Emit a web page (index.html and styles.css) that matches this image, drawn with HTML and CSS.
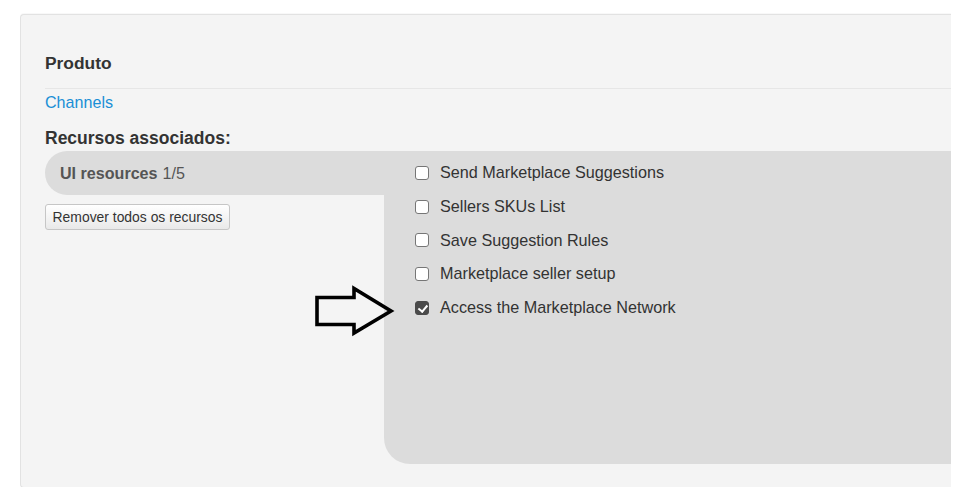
FILE: index.html
```html
<!DOCTYPE html>
<html lang="pt">
<head>
<meta charset="utf-8">
<title>Produto</title>
<link rel="stylesheet" href="styles.css">
</head>
<body>
<div class="panel">
  <h2 class="title">Produto</h2>
  <a class="link" href="#">Channels</a>
  <h3 class="subtitle">Recursos associados:</h3>
  <div class="resources">
    <div class="side">
      <div class="tab"><b>UI resources</b> 1/5</div>
      <button class="btn" type="button">Remover todos os recursos</button>
    </div>
    <div class="content">
      <label class="opt"><input type="checkbox">Send Marketplace Suggestions</label>
      <label class="opt"><input type="checkbox">Sellers SKUs List</label>
      <label class="opt"><input type="checkbox">Save Suggestion Rules</label>
      <label class="opt"><input type="checkbox">Marketplace seller setup</label>
      <label class="opt"><input type="checkbox" checked>Access the Marketplace Network</label>
    </div>
  </div>
</div>
<svg class="arrow" width="84" height="54" viewBox="0 0 84 54" aria-hidden="true">
  <polygon points="5,13.5 42,13.5 42,4.5 79,27 42,49 42,40.5 5,40.5" fill="none" stroke="#000" stroke-width="3.6" stroke-linejoin="miter"/>
</svg>
</body>
</html>
```

FILE: styles.css
```css
html, body {
  margin: 0;
  padding: 0;
  background: #fff;
  overflow: hidden;
}
body {
  font-family: "Liberation Sans", Arial, sans-serif;
  color: #333;
  width: 953px;
  height: 487px;
  position: relative;
}
.panel {
  margin: 14px 0 0 20px;
  width: 931px;
  height: 474px;
  box-sizing: border-box;
  background: #f4f4f4;
  border: 1px solid #e2e2e2;
  border-right: none;
  border-radius: 4px 0 0 4px;
  box-shadow: 0 -1px 1px rgba(0,0,0,0.03);
  padding: 38px 0 0 24px;
  overflow: hidden;
}
.title {
  margin: 0;
  font-size: 17.4px;
  line-height: 20px;
  font-weight: bold;
  padding-bottom: 15px;
  border-bottom: 1px solid #e6e6e6;
}
.link {
  display: block;
  margin-top: 3px;
  font-size: 16.1px;
  line-height: 20px;
  color: #1a8fd6;
  text-decoration: none;
}
.subtitle {
  margin: 16px 0 0 0;
  font-size: 17.5px;
  line-height: 20px;
  font-weight: bold;
}
.resources {
  margin-top: 3px;
  display: flex;
}
.side {
  width: 339px;
  flex: none;
}
.tab {
  height: 44px;
  box-sizing: border-box;
  padding: 1px 0 0 15px;
  display: flex;
  align-items: center;
  background: #dcdcdc;
  border-radius: 22px 0 0 22px;
  font-size: 16.1px;
  color: #555;
}
.tab b {
  margin-right: 5px;
}
.btn {
  margin-top: 9px;
  height: 26px;
  width: 185px;
  padding: 0;
  font-family: "Liberation Sans", Arial, sans-serif;
  font-size: 13.9px;
  color: #333;
  background: linear-gradient(#ffffff, #e9e9e9);
  border: 1px solid #c6c6c6;
  border-radius: 3px;
}
.content {
  flex: 1;
  height: 313px;
  background: #dcdcdc;
  border-radius: 0 0 0 26px;
  padding: 5px 0 0 31px;
  box-sizing: border-box;
}
.opt {
  display: flex;
  align-items: center;
  height: 33.7px;
  font-size: 16.2px;
  color: #333;
}
.opt input {
  appearance: none;
  -webkit-appearance: none;
  margin: 0 11px 0 0;
  width: 14px;
  height: 14px;
  box-sizing: border-box;
  border: 1px solid #767676;
  border-radius: 3px;
  background: #fff;
  position: relative;
  flex: none;
}
.opt input:checked {
  background: #4b4b4b;
  border-color: #4b4b4b;
}
.opt input:checked::after {
  content: "";
  position: absolute;
  left: 3.5px;
  top: 1px;
  width: 3.5px;
  height: 7px;
  border: solid #fff;
  border-width: 0 2.2px 2.2px 0;
  transform: rotate(40deg);
}
.arrow {
  position: absolute;
  left: 312px;
  top: 284px;
}
```
